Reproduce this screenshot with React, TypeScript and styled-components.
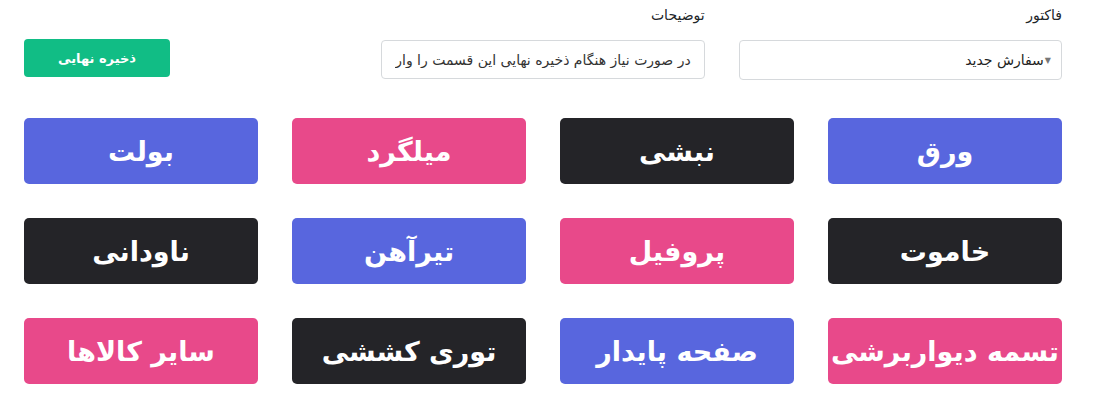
import styled, { createGlobalStyle } from "styled-components";

const GlobalStyle = createGlobalStyle`
  html, body {
    margin: 0;
    padding: 0;
    background: #fff;
    font-family: "DejaVu Sans", "Noto Sans", sans-serif;
    color: #212529;
  }
`;

type Tone = "blue" | "pink" | "dark";

const TONES: Record<Tone, string> = {
  blue: "#5866de",
  pink: "#e8498a",
  dark: "#242428",
};

// RTL order: first item sits on the right
const PRODUCTS: { title: string; tone: Tone }[] = [
  { title: "ورق", tone: "blue" },
  { title: "نبشی", tone: "dark" },
  { title: "میلگرد", tone: "pink" },
  { title: "بولت", tone: "blue" },
  { title: "خاموت", tone: "dark" },
  { title: "پروفیل", tone: "pink" },
  { title: "تیرآهن", tone: "blue" },
  { title: "ناودانی", tone: "dark" },
  { title: "تسمه دیواربرشی", tone: "pink" },
  { title: "صفحه پایدار", tone: "blue" },
  { title: "توری کششی", tone: "dark" },
  { title: "سایر کالاها", tone: "pink" },
];

const Page = styled.div`
  direction: rtl;
  padding: 0 39px 0 24px;
`;

const FormRow = styled.div`
  display: grid;
  grid-template-columns: repeat(3, minmax(0, 1fr));
  column-gap: 34px;
  align-items: end;
  height: 80px;
`;

const Field = styled.div`
  display: flex;
  flex-direction: column;
  min-width: 0;
`;

const Label = styled.label`
  font-size: 14px;
  line-height: 16px;
  height: 16px;
  margin: 7px 0 17px;
  color: #212529;
`;

const SelectBox = styled.div`
  height: 40px;
  box-sizing: border-box;
  border: 1px solid #d6d9dc;
  border-radius: 4px;
  display: flex;
  align-items: center;
  padding: 0 10px 0 12px;
  font-size: 14px;
  color: #222;
`;

const Caret = styled.span`
  font-size: 8px;
  color: #777;
  margin-left: 1px;
`;

const TextInput = styled.input`
  direction: rtl;
  width: 100%;
  height: 39px;
  box-sizing: border-box;
  border: 1px solid #d6d9dc;
  border-radius: 4px;
  padding: 0 13px;
  font-family: inherit;
  font-size: 14px;
  outline: none;
  margin-bottom: 1px;
  &::placeholder {
    color: #333;
  }
`;

const SaveCell = styled.div`
  display: flex;
  justify-content: flex-end;
  padding-bottom: 3px;
`;

const SaveButton = styled.button`
  width: 146px;
  height: 38px;
  border: none;
  border-radius: 4px;
  background: #11bd85;
  color: #fff;
  font-family: inherit;
  font-weight: bold;
  font-size: 13px;
  cursor: pointer;
`;

const Grid = styled.div`
  display: grid;
  grid-template-columns: repeat(4, minmax(0, 1fr));
  column-gap: 34px;
  row-gap: 34px;
  margin-top: 38px;
`;

const ProductButton = styled.button<{ $tone: Tone }>`
  direction: rtl;
  min-width: 0;
  height: 66px;
  border: none;
  border-radius: 5px;
  background: ${(p) => TONES[p.$tone]};
  color: #fff;
  font-family: inherit;
  font-weight: bold;
  font-size: 27px;
  white-space: nowrap;
  overflow: hidden;
  padding: 0;
  cursor: pointer;
`;

export default function App() {
  return (
    <>
      <GlobalStyle />
      <Page>
        <FormRow>
          <Field>
            <Label>فاکتور</Label>
            <SelectBox>
              <Caret>▼</Caret>
              سفارش جدید
            </SelectBox>
          </Field>
          <Field>
            <Label>توضیحات</Label>
            <TextInput placeholder="در صورت نیاز هنگام ذخیره نهایی این قسمت را وارد کنید" />
          </Field>
          <SaveCell>
            <SaveButton>ذخیره نهایی</SaveButton>
          </SaveCell>
        </FormRow>
        <Grid>
          {PRODUCTS.map((p) => (
            <ProductButton key={p.title} $tone={p.tone}>
              {p.title}
            </ProductButton>
          ))}
        </Grid>
      </Page>
    </>
  );
}
